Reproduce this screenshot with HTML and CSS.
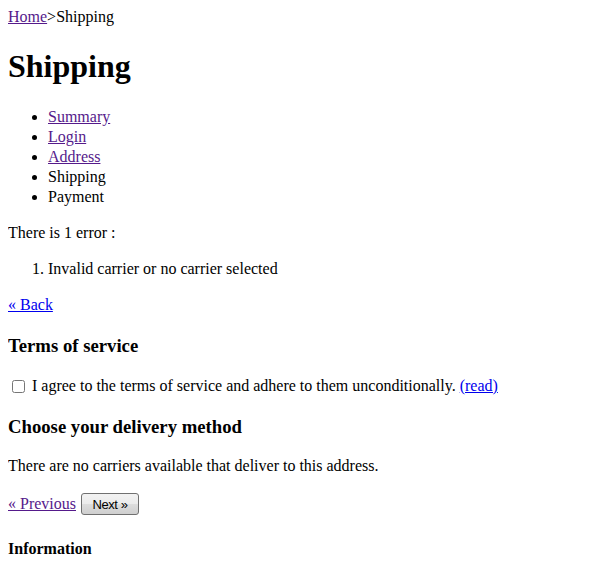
FILE: index.html
```html
<!DOCTYPE html>
<html>
<head>
<meta charset="utf-8">
<link rel="stylesheet" href="styles.css">
</head>
<body>
<div class="crumbs"><a class="visited" href="#">Home</a>&gt;Shipping</div>
<h1 class="title">Shipping</h1>
<ul class="steps">
<li><a class="visited" href="#">Summary</a></li>
<li><a class="visited" href="#">Login</a></li>
<li><a class="visited" href="#">Address</a></li>
<li>Shipping</li>
<li>Payment</li>
</ul>
<p class="txt">There is 1 error :</p>
<ol class="errors">
<li>Invalid carrier or no carrier selected</li>
</ol>
<p class="txt"><a class="link" href="#">« Back</a></p>
<h3 class="sub">Terms of service</h3>
<p class="txt check-row"><input class="cb" type="checkbox"> I agree to the terms of service and adhere to them unconditionally. <a class="link" href="#">(read)</a></p>
<h3 class="sub">Choose your delivery method</h3>
<p class="txt">There are no carriers available that deliver to this address.</p>
<p class="txt nav-row"><a class="visited" href="#">« Previous</a> <button class="btn">Next »</button></p>
<h4 class="info">Information</h4>
</body>
</html>
```
FILE: styles.css
```css
body {
  margin: 7px 8px 8px 8px;
  font-family: "Liberation Serif", "Times New Roman", serif;
  font-size: 16px;
  line-height: 20px;
  color: #000;
  background: #fff;
}
a.visited { color: #551a8b; }
a.link { color: #0000ee; }
.title {
  font-size: 32px;
  line-height: 37px;
  margin: 21.44px 0;
}
.steps, .errors {
  margin: 16px 0;
  padding-left: 40px;
}
.txt { margin: 16px 0; }
.sub {
  font-size: 18.72px;
  line-height: 21.5px;
  margin: 19.72px 0 18.72px;
}
.check-row { line-height: 21px; }
.cb {
  width: 13px;
  height: 13px;
  margin: 3px 3px 3px 4px;
  vertical-align: -2px;
}
.nav-row { line-height: 24px; }
.btn {
  font-family: "Liberation Sans", "DejaVu Sans", sans-serif;
  font-size: 13px;
  letter-spacing: -0.4px;
  height: 22px;
  width: 58px;
  margin-left: 1px;
  padding: 0;
  border: 1px solid #707070;
  border-radius: 3px;
  background: linear-gradient(#f2f2f2 0%, #ebebeb 50%, #dddddd 51%, #cfcfcf 100%);
  color: #000;
}
.info {
  font-size: 16px;
  line-height: 18px;
  margin: 24.28px 0 21.28px;
}
```
